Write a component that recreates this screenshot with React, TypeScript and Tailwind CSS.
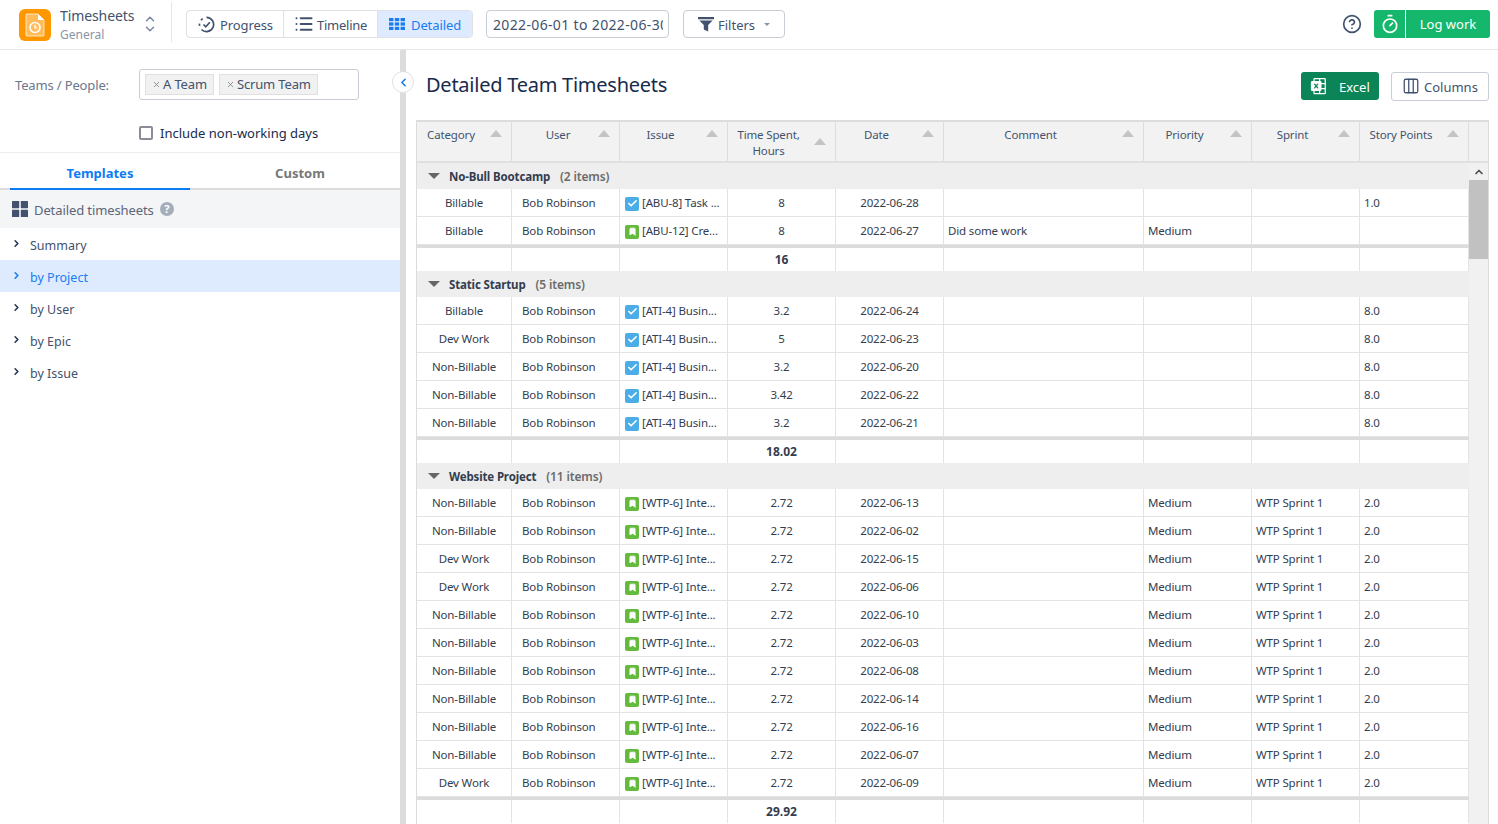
import { ChevronRight, ChevronLeft, ChevronUp, ChevronDown, List, Timer, Columns3, CircleHelp, X, Check, Bookmark } from 'lucide-react';
import { PiMicrosoftExcelLogoFill } from 'react-icons/pi';

type Row = { cat: string; issue: string; type: 'task' | 'story'; time: string; date: string; comment?: string; priority?: string; sprint?: string; points?: string };
type Group = { name: string; count: string; total: string; rows: Row[] };

const atiIssue = '[ATI-4] Busin...';
const wtpIssue = '[WTP-6] Inte...';

const wtp = (cat: string, date: string): Row => ({
  cat,
  issue: wtpIssue,
  type: 'story',
  time: '2.72',
  date,
  priority: 'Medium',
  sprint: 'WTP Sprint 1',
  points: '2.0',
});

const ati = (cat: string, time: string, date: string): Row => ({ cat, issue: atiIssue, type: 'task', time, date, points: '8.0' });

const groups: Group[] = [
  {
    name: 'No-Bull Bootcamp',
    count: '(2 items)',
    total: '16',
    rows: [
      { cat: 'Billable', issue: '[ABU-8] Task ...', type: 'task', time: '8', date: '2022-06-28', points: '1.0' },
      { cat: 'Billable', issue: '[ABU-12] Cre...', type: 'story', time: '8', date: '2022-06-27', comment: 'Did some work', priority: 'Medium' },
    ],
  },
  {
    name: 'Static Startup',
    count: '(5 items)',
    total: '18.02',
    rows: [
      ati('Billable', '3.2', '2022-06-24'),
      ati('Dev Work', '5', '2022-06-23'),
      ati('Non-Billable', '3.2', '2022-06-20'),
      ati('Non-Billable', '3.42', '2022-06-22'),
      ati('Non-Billable', '3.2', '2022-06-21'),
    ],
  },
  {
    name: 'Website Project',
    count: '(11 items)',
    total: '29.92',
    rows: [
      wtp('Non-Billable', '2022-06-13'),
      wtp('Non-Billable', '2022-06-02'),
      wtp('Dev Work', '2022-06-15'),
      wtp('Dev Work', '2022-06-06'),
      wtp('Non-Billable', '2022-06-10'),
      wtp('Non-Billable', '2022-06-03'),
      wtp('Non-Billable', '2022-06-08'),
      wtp('Non-Billable', '2022-06-14'),
      wtp('Non-Billable', '2022-06-16'),
      wtp('Non-Billable', '2022-06-07'),
      wtp('Dev Work', '2022-06-09'),
    ],
  },
];

// widths include the 1px right border of each cell
const columns = [
  { label: 'Category', width: 'w-[95px]', gap: 'mr-[5px]' },
  { label: 'User', width: 'w-[108px]', gap: 'mr-[-6px]' },
  { label: 'Issue', width: 'w-[108px]', gap: 'mr-[5px]' },
  { label: 'Time Spent, Hours', width: 'w-[108px]', gap: 'mr-[5px]' },
  { label: 'Date', width: 'w-[108px]', gap: 'mr-[5px]' },
  { label: 'Comment', width: 'w-[200px]', gap: 'mr-[5px]' },
  { label: 'Priority', width: 'w-[108px]', gap: 'mr-[5px]' },
  { label: 'Sprint', width: 'w-[108px]', gap: 'mr-[5px]' },
  { label: 'Story Points', width: 'w-[109px]', gap: 'mr-[5px]' },
];

const tree = ['Summary', 'by Project', 'by User', 'by Epic', 'by Issue'];

function Logo() {
  return (
    <div className="w-8 h-8 rounded-md bg-[#ff9800] flex items-center justify-center">
      <svg width="20" height="24" viewBox="0 0 20 24" fill="none">
        <path d="M2 1h11l6 6v15a1 1 0 0 1-1 1H2a1 1 0 0 1-1-1V2a1 1 0 0 1 1-1z" fill="#ffffff" fillOpacity="0.35" stroke="#ffffff" strokeOpacity="0.7" />
        <path d="M13 1l6 6h-6z" fill="#ffffff" />
        <circle cx="10" cy="14.5" r="5" stroke="#ffffff" strokeWidth="1.6" />
        <path d="M10 11.8v3h2.2" stroke="#ffffff" strokeWidth="1.3" />
      </svg>
    </div>
  );
}

function ProgressIcon() {
  return (
    <svg width="17" height="17" viewBox="0 0 18 18" fill="none" stroke="#42526e" strokeWidth="1.8">
      <path d="M9 1.5a7.5 7.5 0 1 1-5.3 12.8" />
      <path d="M1.7 10.5a7.5 7.5 0 0 1 0-3M3.2 4.5a7.5 7.5 0 0 1 2.2-2" strokeDasharray="2.4 1.4" />
      <path d="M5.8 9l2.4 2.4 4.4-4.8" />
    </svg>
  );
}

function DetailedIcon() {
  return (
    <svg width="16" height="12" viewBox="0 0 16 12" fill="#1a7cf0">
      <rect x="0" y="0" width="4.4" height="3.2" />
      <rect x="5.8" y="0" width="4.4" height="3.2" />
      <rect x="11.6" y="0" width="4.4" height="3.2" />
      <rect x="0" y="4.4" width="4.4" height="3.2" />
      <rect x="5.8" y="4.4" width="4.4" height="3.2" />
      <rect x="11.6" y="4.4" width="4.4" height="3.2" />
      <rect x="0" y="8.8" width="4.4" height="3.2" />
      <rect x="5.8" y="8.8" width="4.4" height="3.2" />
      <rect x="11.6" y="8.8" width="4.4" height="3.2" />
    </svg>
  );
}

function FunnelIcon() {
  return (
    <svg width="16" height="16" viewBox="0 0 16 16" fill="#42526e">
      <path d="M0 1h16v2.2H0zM1.4 4.4h13.2L10.2 9v6.4L5.8 13.4V9z" />
    </svg>
  );
}

function GridIcon() {
  return (
    <svg width="16" height="16" viewBox="0 0 16 16" fill="#42526e">
      <rect x="0" y="0" width="7.2" height="7.2" rx="0.6" />
      <rect x="8.8" y="0" width="7.2" height="7.2" rx="0.6" />
      <rect x="0" y="8.8" width="7.2" height="7.2" rx="0.6" />
      <rect x="8.8" y="8.8" width="7.2" height="7.2" rx="0.6" />
    </svg>
  );
}

function SortArrow() {
  return <div className="shrink-0 mr-[9px] mt-[-3px] w-0 h-0 border-x-[6px] border-x-transparent border-b-[7px] border-b-[#c4c4c4]" />;
}

function IssueIcon({ type }: { type: 'task' | 'story' }) {
  if (type === 'task') {
    return (
      <span className="shrink-0 w-[14px] h-[14px] mt-[2px] rounded-[2px] bg-[#4bade8] flex items-center justify-center">
        <Check size={11} strokeWidth={3.5} className="text-white" />
      </span>
    );
  }
  return (
    <span className="shrink-0 w-[14px] h-[14px] mt-[2px] rounded-[2px] bg-[#63ba3c] flex items-center justify-center">
      <Bookmark size={9} fill="#ffffff" className="text-white" />
    </span>
  );
}

function DataRow({ row }: { row: Row }) {
  return (
    <div className="flex h-[28px] border-b border-[#e3e3e3] text-[#333d4f]">
      <div className="w-[95px] shrink-0 border-r border-[#e3e3e3] flex items-center justify-center">{row.cat}</div>
      <div className="w-[108px] shrink-0 border-r border-[#e3e3e3] flex items-center pl-[10px]">Bob Robinson</div>
      <div className="w-[108px] shrink-0 border-r border-[#e3e3e3] flex items-center pl-[5px] gap-[3px] whitespace-nowrap overflow-hidden">
        <IssueIcon type={row.type} />
        {row.issue}
      </div>
      <div className="w-[108px] shrink-0 border-r border-[#e3e3e3] flex items-center justify-center">{row.time}</div>
      <div className="w-[108px] shrink-0 border-r border-[#e3e3e3] flex items-center justify-center">{row.date}</div>
      <div className="w-[200px] shrink-0 border-r border-[#e3e3e3] flex items-center pl-[4px]">{row.comment}</div>
      <div className="w-[108px] shrink-0 border-r border-[#e3e3e3] flex items-center pl-[4px]">{row.priority}</div>
      <div className="w-[108px] shrink-0 border-r border-[#e3e3e3] flex items-center pl-[4px]">{row.sprint}</div>
      <div className="w-[109px] shrink-0 border-r border-[#e3e3e3] flex items-center pl-[4px]">{row.points}</div>
    </div>
  );
}

function TotalRow({ total }: { total: string }) {
  return (
    <div className="flex h-[26px] border-t-[3px] border-t-[#dcdcdc] text-[#333d4f] font-bold text-[12px] tracking-normal">
      <div className="w-[95px] shrink-0 border-r border-[#e3e3e3]" />
      <div className="w-[108px] shrink-0 border-r border-[#e3e3e3]" />
      <div className="w-[108px] shrink-0 border-r border-[#e3e3e3]" />
      <div className="w-[108px] shrink-0 border-r border-[#e3e3e3] flex items-center justify-center">{total}</div>
      <div className="w-[108px] shrink-0 border-r border-[#e3e3e3]" />
      <div className="w-[200px] shrink-0 border-r border-[#e3e3e3]" />
      <div className="w-[108px] shrink-0 border-r border-[#e3e3e3]" />
      <div className="w-[108px] shrink-0 border-r border-[#e3e3e3]" />
      <div className="w-[109px] shrink-0 border-r border-[#e3e3e3]" />
    </div>
  );
}

function App() {
  return (
    <div className="h-screen flex flex-col bg-white overflow-hidden text-[#42526e] font-['Noto_Sans',sans-serif]">
      {/* Header */}
      <header className="h-[50px] shrink-0 border-b border-[#e4e6ea] flex items-center pl-[19px] pr-2">
        <Logo />
        <div className="ml-[9px] w-[78px] flex flex-col mt-[2px]">
          <span className="text-[14px] tracking-[-0.1px] leading-[18px] text-[#42526e]">Timesheets</span>
          <span className="text-[12px] leading-[19px] text-[#8a94a6]">General</span>
        </div>
        <div className="flex flex-col text-[#7a869a] ml-[5px] mt-[-2px]">
          <ChevronUp size={14} strokeWidth={2.5} className="mb-[-4px]" />
          <ChevronDown size={14} strokeWidth={2.5} />
        </div>
        <div className="w-px h-[40px] bg-[#e4e6ea] ml-[14px] mt-[-6px]" />
        <div className="ml-[14px] flex h-[28px] border border-[#dfe1e6] rounded-[4px] text-[13px] tracking-[-0.1px] overflow-hidden mt-[-1px]">
          <div className="w-[97px] flex items-center pl-[11px] gap-[5px] border-r border-[#dfe1e6]">
            <ProgressIcon />
            <span className="mt-[3px]">Progress</span>
          </div>
          <div className="w-[94px] flex items-center pl-[10px] gap-[3px] border-r border-[#dfe1e6]">
            <List size={20} strokeWidth={2.4} />
            <span className="mt-[3px] tracking-[-0.25px]">Timeline</span>
          </div>
          <div className="w-[94px] flex items-center pl-[11px] gap-[6px] bg-[#deebff] text-[#1a7cf0]">
            <DetailedIcon />
            <span className="mt-[3px]">Detailed</span>
          </div>
        </div>
        <div className="ml-[13px] w-[183px] h-[28px] border border-[#c9ced6] rounded-[4px] pl-[6px] pr-[5px] flex items-center text-[14px] tracking-[0.35px] mt-[-1px]">
          <span className="min-w-0 overflow-hidden whitespace-nowrap">2022-06-01 to 2022-06-30</span>
        </div>
        <div className="ml-[14px] w-[102px] h-[28px] border border-[#c9ced6] rounded-[4px] flex items-center pl-[14px] text-[13px] mt-[-1px]">
          <FunnelIcon />
          <span className="ml-[4px] mt-[3px]">Filters</span>
          <span className="ml-[9px] w-0 h-0 border-x-[3px] border-x-transparent border-t-[3px] border-t-[#8a94a6]" />
        </div>
        <CircleHelp size={20} strokeWidth={2} className="ml-auto mr-[12px] mt-[-2px]" />
        <div className="flex h-[28px] w-[116px] rounded-[3px] bg-[#15b76c] text-white text-[13px] mt-[-2px]">
          <div className="w-[32px] flex items-center justify-center border-r border-white">
            <Timer size={20} strokeWidth={2} />
          </div>
          <div className="flex-1 flex items-center justify-center pt-[2px]">Log work</div>
        </div>
      </header>

      <div className="flex-1 flex min-h-0">
        {/* Sidebar */}
        <aside className="relative w-[406px] shrink-0 border-r-[6px] border-[#dcdcdc] flex flex-col">
          <div className="flex items-center pt-[19px] pl-[15px]">
            <span className="w-[124px] text-[13px] tracking-[-0.15px] pt-[2px] text-[#6b778c]">Teams / People:</span>
            <div className="w-[220px] h-[31px] border border-[#c9ced6] rounded-[3px] flex items-center pl-[5px] gap-[5px] text-[13px] tracking-[-0.15px]">
              <span className="h-[21px] px-[6px] flex items-center gap-[2px] bg-[#f1f1f1] border border-[#e0e0e0] text-[#42526e]">
                <X size={9} className="text-[#777]" />A Team
              </span>
              <span className="h-[21px] px-[6px] flex items-center gap-[2px] bg-[#f1f1f1] border border-[#e0e0e0] text-[#42526e]">
                <X size={9} className="text-[#777]" />Scrum Team
              </span>
            </div>
          </div>
          <div className="flex items-center pl-[139px] mt-[25px] h-[16px] text-[13px] text-[#172b4d] gap-[7px]">
            <span className="w-[14px] h-[14px] border-2 border-[#8c8c99] rounded-[2px]" />
            <span className="mt-[2px]">Include non-working days</span>
          </div>
          <div className="mt-[11px] border-t border-[#ececec] flex h-[38px] border-b-2 border-b-[#dcdcdc] pl-[10px] text-[13px] font-bold">
            <div className="w-[180px] shrink-0 h-[37px] pt-[6px] border-b-2 border-[#0c7cf5] text-[#0c7cf5] flex items-center justify-center">Templates</div>
            <div className="w-[220px] shrink-0 pt-[7px] flex items-center justify-center text-[#777777]">Custom</div>
          </div>
          <div className="h-[38px] bg-[#f4f5f7] flex items-center pl-[12px] text-[13px] tracking-[-0.1px] text-[#5b6678]">
            <GridIcon />
            <span className="ml-[6px] mt-[3px]">Detailed timesheets</span>
            <span className="ml-[6px] w-[14px] h-[14px] rounded-full bg-[#a5adba] text-white text-[11px] font-bold flex items-center justify-center">?</span>
          </div>
          <div className="flex flex-col">
            {tree.map((item) => (
              <div
                key={item}
                className={`h-[32px] flex items-center pl-[11px] text-[12.5px] ${item === 'by Project' ? 'bg-[#deebff] text-[#1a7cf0]' : 'text-[#42526e]'}`}
              >
                <ChevronRight size={11} strokeWidth={3.5} className={`mt-[-2px] ${item === 'by Project' ? 'text-[#1a7cf0]' : 'text-[#253858]'}`} />
                <span className="ml-[8px] mt-[5px]">{item}</span>
              </div>
            ))}
          </div>
          {/* collapse handle sits on the splitter */}
          <div className="absolute right-[-14px] top-[21px] w-[22px] h-[22px] rounded-full bg-white border border-[#dfe1e6] flex items-center justify-center">
            <ChevronLeft size={13} strokeWidth={3} className="text-[#1a7cf0]" />
          </div>
        </aside>

        {/* Main */}
        <main className="flex-1 min-w-0 pl-[10px] pr-[9px] flex flex-col">
          <div className="h-[70px] shrink-0 flex items-center pl-[10px]">
            <h1 className="text-[20px] tracking-[-0.25px] text-[#172b4d] flex-1 mb-[1px]">Detailed Team Timesheets</h1>
            <div className="h-[28px] w-[78px] rounded-[3px] bg-[#0b8457] text-white text-[13px] flex items-center pl-[8px] mt-[2px]">
              <PiMicrosoftExcelLogoFill size={20} />
              <span className="ml-[10px] mt-[3px]">Excel</span>
            </div>
            <div className="ml-[12px] h-[29px] w-[98px] rounded-[3px] border border-[#c9ced6] text-[13px] flex items-center pl-[10px] mt-[2px]">
              <Columns3 size={18} strokeWidth={1.7} />
              <span className="ml-[4px] mt-[3px]">Columns</span>
            </div>
          </div>
          <div className="flex-1 min-h-0 border-x border-t-2 border-[#dcdcdc] bg-[#f1f1f1] text-[11.5px] tracking-[-0.15px] flex flex-col overflow-hidden">
            {/* Column headers */}
            <div className="h-[41px] shrink-0 flex border-b-2 border-[#e0e0e0] bg-[#f2f2f2] text-[#42526e]">
              {columns.map((c) => (
                <div key={c.label} className={`${c.width} shrink-0 border-r border-[#dddddd] flex items-center self-stretch`}>
                  <div className="flex items-center w-full mb-auto pt-[5px]">
                    <span className={`flex-1 text-center leading-4 ${c.gap}`}>{c.label}</span>
                    <SortArrow />
                  </div>
                </div>
              ))}
            </div>
            <div className="flex-1 min-h-0 flex">
              {/* Rows */}
              <div className="w-[1052px] shrink-0 bg-white overflow-hidden">
                {groups.map((g) => (
                  <div key={g.name}>
                    <div className="h-[26px] bg-[#eeeeee] flex items-center pl-[11px]">
                      <span className="w-0 h-0 border-x-[6px] border-x-transparent border-t-[6px] border-t-[#666666]" />
                      <span className="ml-[9px] mt-[2px] font-bold text-[#333d4f]">{g.name}</span>
                      <span className="ml-[10px] mt-[2px] text-[12px] font-semibold text-[#6b6b6b]">{g.count}</span>
                    </div>
                    {g.rows.map((r, i) => (
                      <DataRow key={i} row={r} />
                    ))}
                    <TotalRow total={g.total} />
                  </div>
                ))}
              </div>
              {/* Scrollbar */}
              <div className="flex-1 flex flex-col bg-[#f1f1f1]">
                <div className="h-[17px] flex items-center justify-center">
                  <ChevronUp size={12} strokeWidth={3.5} className="text-[#505050]" />
                </div>
                <div className="h-[79px] bg-[#c1c1c1]" />
              </div>
            </div>
          </div>
        </main>
      </div>
    </div>
  );
}

export default App;
